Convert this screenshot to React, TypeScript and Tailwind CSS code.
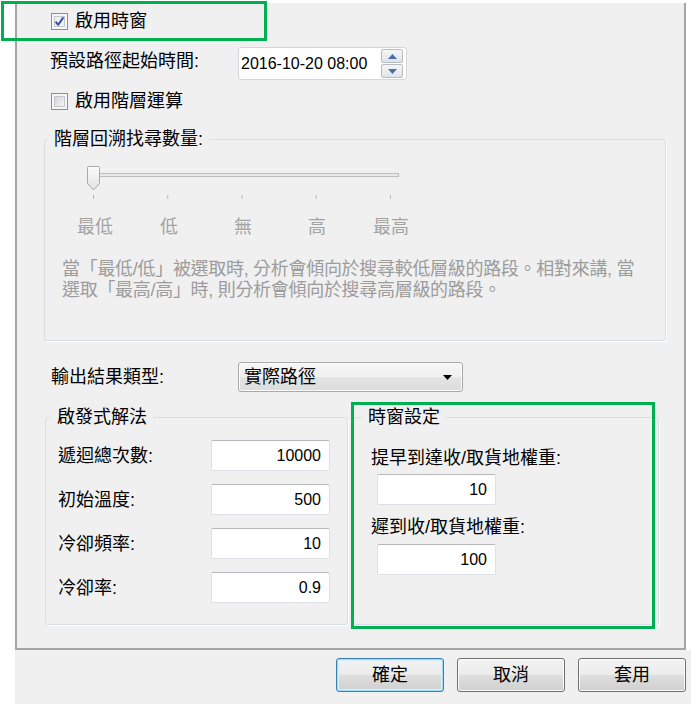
import React from "react";

function CheckBox({ checked, id }: { checked?: boolean; id: string }) {
  return (
    <svg width="17" height="17" viewBox="0 0 17 17" className="shrink-0">
      <defs>
        <linearGradient id={id} x1="0" y1="0" x2="1" y2="1">
          <stop offset="0" stopColor="#cfd2d6" />
          <stop offset="1" stopColor="#f7f7f7" />
        </linearGradient>
      </defs>
      <rect x="0.5" y="0.5" width="16" height="16" fill="#f6f6f6" stroke="#8f8f8f" />
      <rect x="3.5" y="3.5" width="10" height="10" fill={checked ? "#eef0f3" : `url(#${id})`} stroke="#c4c7cc" />
      {checked && (
        <path d="M4.6 8.6 L7.2 11.8 L12.4 4.4" stroke="#3350a0" strokeWidth="2" fill="none" strokeLinejoin="round" />
      )}
    </svg>
  );
}

function NumBox({ value, w = "w-[119px]" }: { value: string; w?: string }) {
  return (
    <div
      className={`${w} h-[31px] shrink-0 bg-white border border-[#dde1e6] border-t-[#b5b8bd] rounded-[2px] flex items-center justify-end pr-[8px] text-[16px] text-black font-['Liberation_Sans',sans-serif]`}
    >
      {value}
    </div>
  );
}

function Group({
  title,
  children,
  className,
  legendClass,
}: {
  title: string;
  children: React.ReactNode;
  className: string;
  legendClass: string;
}) {
  return (
    <fieldset
      className={`border border-[#d5dfe5] rounded-[3px] shadow-[1px_1px_0_#ffffff] flex flex-col shrink-0 ${className}`}
    >
      <legend className={`px-[6px] leading-[24px] text-[18px] text-black ${legendClass}`}>{title}</legend>
      {children}
    </fieldset>
  );
}

function Btn({ label, def }: { label: string; def?: boolean }) {
  return (
    <div
      className={`w-[108px] h-[34px] rounded-[3px] border flex items-center justify-center text-[18px] text-black bg-[linear-gradient(#f3f3f3,#ececec_48%,#dedede_52%,#d0d0d0)] ${
        def
          ? "border-[#3c7fb1] shadow-[inset_0_0_0_1px_#9fdcf8,inset_0_0_0_2px_#d8f0fb]"
          : "border-[#707070] shadow-[inset_0_0_0_1px_#fbfbfb]"
      }`}
    >
      {label}
    </div>
  );
}

export default function App() {
  const ticks = [33.5, 107.75, 182, 256.25, 330.5];
  return (
    <div className="relative w-[691px] h-[704px] bg-white overflow-hidden font-['Liberation_Sans','Noto_Sans_CJK_TC',sans-serif] text-[18px] text-black">
      {/* main tab page */}
      <div className="ml-[15px] mt-[3px] w-[671px] h-[647px] bg-[#f0f0f0] border-l-2 border-r-2 border-b-2 border-[#a4a4a4] flex flex-col">
        {/* row 1 */}
        <div className="mt-[5px] h-[26px] flex items-center pl-[34px] gap-[7px]">
          <CheckBox checked id="cb1" />
          <span className="leading-[24px]">啟用時窗</span>
        </div>
        {/* row 2 */}
        <div className="mt-[13px] h-[33px] flex items-center pl-[33px]">
          <span className="w-[188px] shrink-0 leading-[24px] mb-[6px]">預設路徑起始時間:</span>
          <div className="w-[169px] h-[33px] bg-white border border-[#d3d6da] rounded-[3px] flex items-center pl-[2px] pr-[3px] justify-between">
            <span className="text-[16px] font-['Liberation_Sans',sans-serif]">2016-10-20 08:00</span>
            <div className="flex flex-col gap-[1px]">
              <div className="w-[22px] h-[14px] rounded-[2px] border border-[#b9bcc1] bg-[linear-gradient(#f5f6f8,#dfe3e8)] flex items-center justify-center">
                <svg width="9" height="5" viewBox="0 0 9 5">
                  <path d="M0 5 L4.5 0 L9 5 Z" fill="#4c6ea8" />
                </svg>
              </div>
              <div className="w-[22px] h-[14px] rounded-[2px] border border-[#b9bcc1] bg-[linear-gradient(#f5f6f8,#dfe3e8)] flex items-center justify-center">
                <svg width="9" height="5" viewBox="0 0 9 5">
                  <path d="M0 0 L9 0 L4.5 5 Z" fill="#4c6ea8" />
                </svg>
              </div>
            </div>
          </div>
        </div>
        {/* row 3 */}
        <div className="mt-[8px] h-[26px] flex items-center pl-[34px] gap-[7px]">
          <CheckBox id="cb2" />
          <span className="leading-[24px]">啟用階層運算</span>
        </div>
        {/* hierarchy group */}
        <Group title="階層回溯找尋數量:" className="mt-[13px] ml-[27px] w-[622px] h-[214px]" legendClass="ml-[3px]">
          <svg width="350" height="40" viewBox="0 0 350 40" className="mt-[13px] ml-[15px] block">
            <defs>
              <linearGradient id="thumb" x1="0" y1="0" x2="0" y2="1">
                <stop offset="0" stopColor="#fbfbfb" />
                <stop offset="1" stopColor="#e2e2e2" />
              </linearGradient>
            </defs>
            <rect x="28.5" y="9.5" width="310" height="3" fill="#e9e9e9" stroke="#bdbdbd" />
            {ticks.map((x) => (
              <line key={x} x1={x} y1="31" x2={x} y2="35" stroke="#b8b8b8" strokeWidth="1" />
            ))}
            <path
              d="M27.5 3.5 Q27.5 2.5 28.5 2.5 H38.5 Q39.5 2.5 39.5 3.5 V19.5 L33.5 26 L27.5 19.5 Z"
              fill="url(#thumb)"
              stroke="#a9a9a9"
            />
          </svg>
          <div className="mt-[11px] ml-[13px] flex h-[24px] leading-[24px] text-[#a3a3a3]">
            {["最低", "低", "無", "高", "最高"].map((l) => (
              <div key={l} className="w-[74px] text-center">
                {l}
              </div>
            ))}
          </div>
          <div className="mt-[20px] ml-[17px] leading-[21px] text-[#9c9c9c] whitespace-nowrap tracking-[-0.3px]">
            當「最低/低」被選取時, 分析會傾向於搜尋較低層級的路段。相對來講, 當
            <br />
            選取「最高/高」時, 則分析會傾向於搜尋高層級的路段。
          </div>
        </Group>
        {/* output type */}
        <div className="mt-[21px] h-[30px] flex items-center pl-[34px]">
          <span className="w-[187px] shrink-0 leading-[24px]">輸出結果類型:</span>
          <div className="w-[225px] h-[30px] rounded-[3px] border border-[#a9a9a9] bg-[linear-gradient(#f7f7f7,#efefef_50%,#e4e4e4_52%,#dcdcdc)] shadow-[inset_0_0_0_1px_#fbfbfb] flex items-center justify-between pl-[5px] pr-[10px]">
            <span className="leading-[24px]">實際路徑</span>
            <svg width="9" height="5" viewBox="0 0 9 5">
              <path d="M0 0 L9 0 L4.5 5 Z" fill="#000" />
            </svg>
          </div>
        </div>
        {/* bottom groups */}
        <div className="mt-[13px] ml-[28px] flex gap-[5px]">
          <Group title="啟發式解法" className="w-[303px] h-[220px]" legendClass="ml-[5px]">
            <div className="mt-[11px] flex flex-col gap-[13px]">
              {[
                ["遞迴總次數:", "10000"],
                ["初始溫度:", "500"],
                ["冷卻頻率:", "10"],
                ["冷卻率:", "0.9"],
              ].map(([l, v]) => (
                <div key={l} className="h-[31px] flex items-center pl-[12px]">
                  <span className="w-[153px] shrink-0 leading-[24px]">{l}</span>
                  <NumBox value={v} />
                </div>
              ))}
            </div>
          </Group>
          <Group title="時窗設定" className="w-[306px] h-[220px]" legendClass="ml-[8px]">
            <div className="mt-[17px] pl-[17px] leading-[24px]">提早到達收/取貨地權重:</div>
            <div className="mt-[4px] ml-[23px]">
              <NumBox value="10" />
            </div>
            <div className="mt-[10px] pl-[17px] leading-[24px]">遲到收/取貨地權重:</div>
            <div className="mt-[5px] ml-[23px]">
              <NumBox value="100" />
            </div>
          </Group>
        </div>
      </div>
      {/* button bar */}
      <div className="ml-[15px] w-[676px] h-[54px] bg-[#f0f0f0] flex justify-end gap-[13px] pr-[5px] pt-[8px]">
        <Btn label="確定" def />
        <Btn label="取消" />
        <Btn label="套用" />
      </div>
      {/* annotation overlays */}
      <div className="absolute left-[1px] top-[1px] w-[266px] h-[40px] border-[3px] border-[#00b050] pointer-events-none" />
      <div className="absolute left-[351px] top-[402px] w-[304px] h-[227px] border-[3px] border-[#00b050] pointer-events-none" />
    </div>
  );
}
